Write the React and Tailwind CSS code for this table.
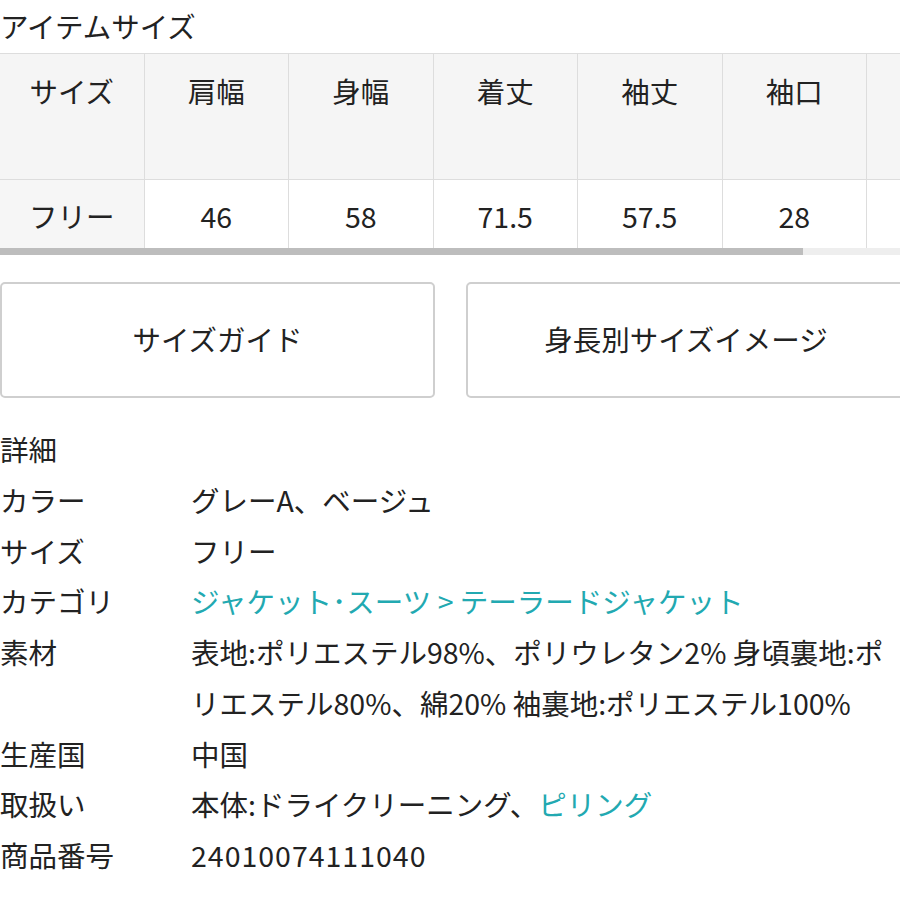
import React from "react";

const headers = ["サイズ", "肩幅", "身幅", "着丈", "袖丈", "袖口", ""];
const values = ["フリー", "46", "58", "71.5", "57.5", "28", ""];

function Row({ label, children }) {
  return (
    <div className="flex leading-[50.75px]">
      <div className="w-[191px] shrink-0">{label}</div>
      <div className="flex-1">{children}</div>
    </div>
  );
}

export default function App() {
  return (
    <div
      className="w-[900px] h-[900px] overflow-hidden bg-white text-[#222] text-[28.5px]"
      style={{ fontFamily: '"Noto Sans CJK JP", "Noto Sans", sans-serif' }}
    >
      <div className="h-[53px] leading-[52px]">アイテムサイズ</div>
      <div className="w-[900px] overflow-hidden">
        <div className="flex w-[1012px] border-t border-[#ddd]">
          {headers.map((h, i) => (
            <div
              key={i}
              className="w-[144.5px] shrink-0 h-[126px] bg-[#f5f5f5] border-r border-b border-[#ddd] text-center pt-[17px] leading-[40px]"
            >
              {h}
            </div>
          ))}
        </div>
        <div className="flex w-[1012px]">
          {values.map((v, i) => (
            <div
              key={i}
              className={
                "w-[144.5px] shrink-0 h-[68px] border-r border-[#ddd] text-center leading-[72px] " +
                (i === 0 ? "bg-[#f6f6f6]" : "bg-white")
              }
            >
              {v}
            </div>
          ))}
        </div>
        <div className="h-[7px] w-full bg-[#eeeeee]">
          <div className="h-[7px] w-[803px] bg-[#bdbdbd]" />
        </div>
      </div>

      <div className="flex gap-[31px] mt-[27px]">
        <div className="w-[435px] h-[116px] shrink-0 border-2 border-[#cfcfcf] rounded-[5px] flex items-center justify-center pb-[2px]">
          サイズガイド
        </div>
        <div className="w-[440px] h-[116px] shrink-0 border-2 border-[#cfcfcf] rounded-[5px] flex items-center justify-center pb-[2px]">
          身長別サイズイメージ
        </div>
      </div>

      <div className="mt-[26px]">
        <div className="leading-[50.75px]">詳細</div>
        <Row label="カラー">グレーA、ベージュ</Row>
        <Row label="サイズ">フリー</Row>
        <Row label="カテゴリ">
          <span className="text-[#22a9b1]">ジャケット･スーツ &gt; テーラードジャケット</span>
        </Row>
        <Row label="素材">
          <div className="whitespace-nowrap">表地:ポリエステル98%、ポリウレタン2% 身頃裏地:ポ</div>
          <div className="whitespace-nowrap">リエステル80%、綿20% 袖裏地:ポリエステル100%</div>
        </Row>
        <Row label="生産国">中国</Row>
        <Row label="取扱い">
          本体:ドライクリーニング、<span className="text-[#22a9b1]">ピリング</span>
        </Row>
        <Row label="商品番号">
          <span className="tracking-[1px]">24010074111040</span>
        </Row>
      </div>
    </div>
  );
}
